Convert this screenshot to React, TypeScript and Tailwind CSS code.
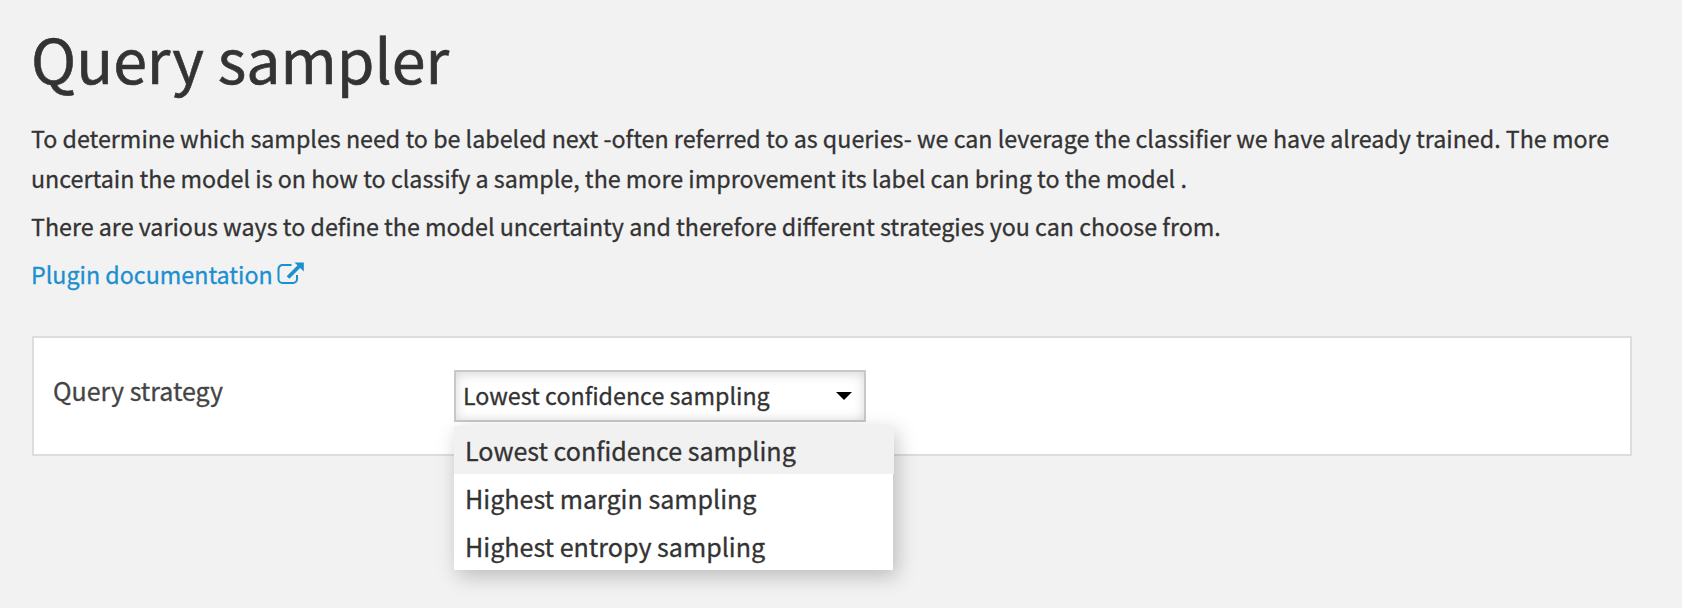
const options = [
  "Lowest confidence sampling",
  "Highest margin sampling",
  "Highest entropy sampling",
];

function ExternalLinkIcon() {
  return (
    <svg className="mt-[7px] ml-[3px] h-[24px] w-[28px]" viewBox="0 0 28 24" fill="none">
      <path
        d="M15.500 4H6.500A4 4 0 0 0 2.500 8V18A4 4 0 0 0 6.500 22H17A4 4 0 0 0 21 18V14"
        stroke="#1b8fd0"
        strokeWidth="2"
      />
      <path d="M12 16.500L23 5.500" stroke="#1b8fd0" strokeWidth="3.700" />
      <path d="M18.500 1.500H27.800V10.500Z" fill="#1b8fd0" />
    </svg>
  );
}

export default function App() {
  return (
    <main className="h-[608px] w-[1682px] overflow-hidden bg-[#f2f2f2] pl-8 font-['Noto_Sans_CJK_SC','Noto_Sans_CJK_JP',sans-serif] text-[#333] [-webkit-text-stroke:0.3px_currentColor]">
      <h1 className="-ml-px h-[118px] pt-[18px] text-[60.9px] leading-[80px] whitespace-nowrap [-webkit-text-stroke:0.6px_currentColor]">
        Query sampler
      </h1>
      <div className="-ml-px text-[23.265px] leading-[40px] whitespace-nowrap">
        <p>
          To determine which samples need to be labeled next -often referred to as queries- we can leverage the
          classifier we have already trained. The more
          <br />
          uncertain the model is on how to classify a sample, the more improvement its label can bring to the model .
        </p>
        <p className="mt-2">
          There are various ways to define the model uncertainty and therefore different strategies you can choose
          from.
        </p>
        <a className="mt-2 flex text-[#1b8fd0]">
          <span>Plugin documentation</span>
          <ExternalLinkIcon />
        </a>
      </div>
      <section className="mt-[42px] flex h-[120px] w-[1600px] border-2 border-[#ddd] bg-white">
        <label className="w-[420px] pt-[32px] pl-[19px] text-[25px] leading-[40px] whitespace-nowrap text-[#444]">
          Query strategy
        </label>
        <div className="relative mt-[32px] h-[52px] w-[412px]">
          <div className="flex h-[52px] items-center justify-between border-2 border-[#c8c8c8] bg-white pr-[12px] pl-[7px] text-[23.265px] leading-[46px] whitespace-nowrap shadow-[inset_0_2px_12px_rgba(0,0,0,0.16)]">
            <span className="pb-[2px]">Lowest confidence sampling</span>
            <svg className="h-[8px] w-[16px]" viewBox="0 0 16 8">
              <path d="M0 0H16L8 8Z" fill="#000" />
            </svg>
          </div>
          <ul className="absolute top-[56px] left-0 z-10 w-[439px] bg-white text-[25.08px] leading-[48px] whitespace-nowrap shadow-[4px_6px_20px_rgba(0,0,0,0.23)]">
            {options.map((option, i) => (
              <li key={option} className={i === 0 ? "h-[48px] w-[440px] bg-[#f1f1f1] pl-[11px]" : "h-[48px] pl-[11px]"}>
                {option}
              </li>
            ))}
          </ul>
        </div>
      </section>
    </main>
  );
}
